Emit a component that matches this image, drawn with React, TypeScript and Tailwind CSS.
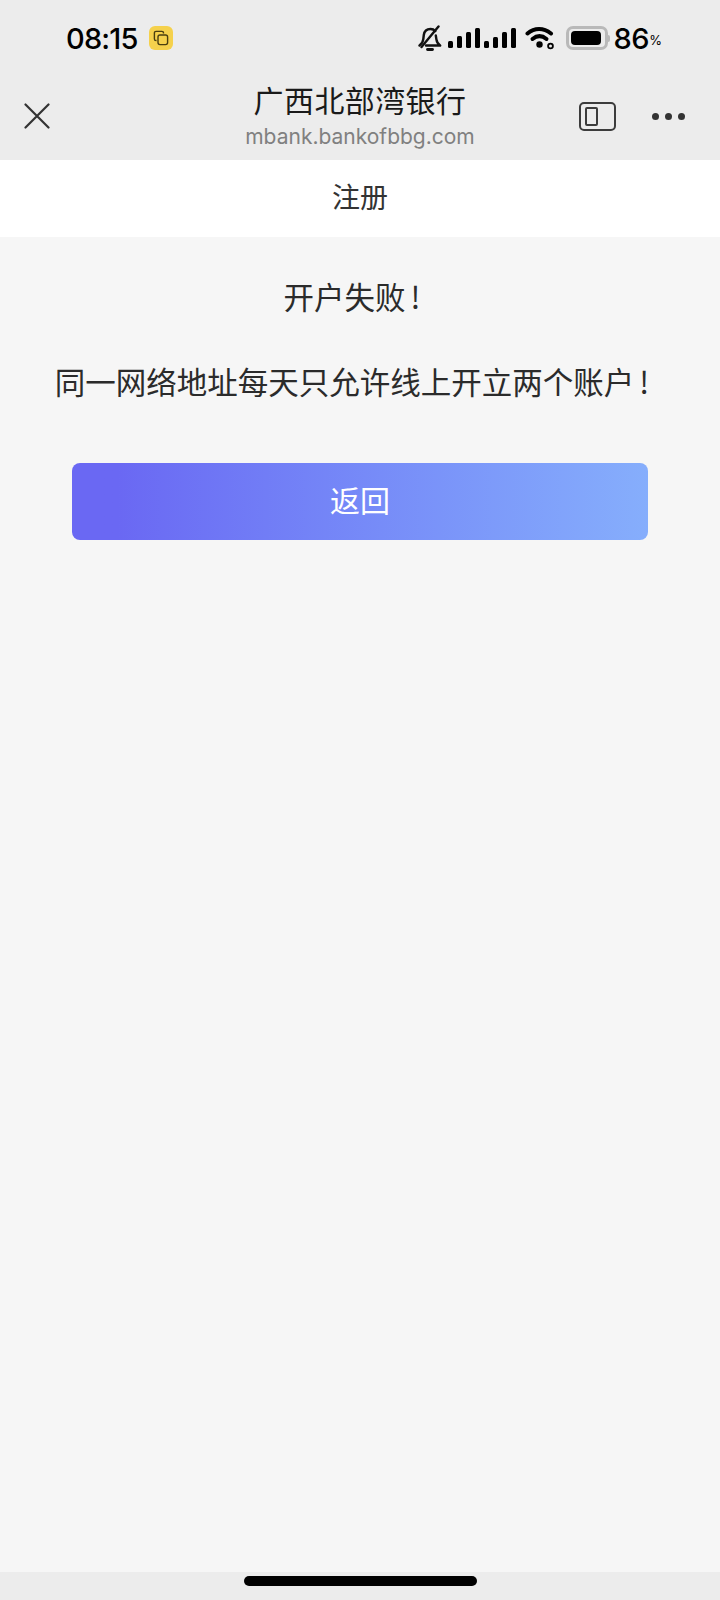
import React from "react";

const cjk = "font-['Noto_Sans_CJK_SC','Noto_Sans',sans-serif]";

function Bars({ heights }: { heights: number[] }) {
  return (
    <div className="flex items-end gap-[4px]">
      {heights.map((h, i) => (
        <div key={i} className="w-[5px] rounded-[1.5px] bg-black" style={{ height: h }} />
      ))}
    </div>
  );
}

function StatusBar() {
  return (
    <div className="flex h-[76px] items-center justify-between pl-[66px] pr-[58px] font-['Inter',sans-serif] text-black">
      <div className="flex items-center gap-[11px]">
        <span className="text-[29px] font-medium leading-none tracking-[-0.8px]">08:15</span>
        <div className="flex h-[24px] w-[24px] items-center justify-center rounded-[6px] bg-[#f5d14c]">
          <svg width="16" height="16" viewBox="0 0 16 16" fill="none" stroke="#4a3f10" strokeWidth="1.4">
            <path d="M10.5 3.5V3a1.6 1.6 0 0 0-1.6-1.6H3A1.6 1.6 0 0 0 1.4 3v5.9A1.6 1.6 0 0 0 3 10.5h.5" />
            <rect x="5" y="5" width="9.6" height="9.6" rx="2" />
          </svg>
        </div>
      </div>
      <div className="flex items-center">
        <svg width="24" height="26" viewBox="0 0 24 26" fill="none" stroke="#111" strokeWidth="2.4" strokeLinecap="round" strokeLinejoin="round">
          <path d="M1.5 20.5c2.5-1.8 3.5-3.5 3.8-6.5l.5-4c.5-3.5 3-6 6.7-6 2 0 3.6.7 4.8 2" />
          <path d="M17.8 10.5l.6 3.9c.4 2.8 1.4 4.6 3.8 6.1H8" />
          <path d="M20.5 1.5 3.5 22" />
          <path d="M9.5 24.5h5" strokeWidth="2.8" />
        </svg>
        <div className="ml-[6px] flex gap-[4px]">
          <Bars heights={[7, 12, 16, 20]} />
          <Bars heights={[7, 11, 16, 20]} />
        </div>
        <svg className="ml-[9px]" width="30" height="24" viewBox="0 0 30 24" fill="none" stroke="#000" strokeLinecap="round">
          <path d="M2.5 7.5C9.5 1.500 18.500 1.500 26 7.500" strokeWidth="4" />
          <path d="M7.500 13c4.500-3.700 9.500-3.700 14 0" strokeWidth="4" />
          <circle cx="14.500" cy="18.500" r="3.200" fill="#000" stroke="none" />
          <circle cx="25.500" cy="20" r="2.400" strokeWidth="1.800" />
        </svg>
        <div className="ml-[11px] flex h-[24px] w-[42px] items-center justify-start rounded-[7px] border-[3px] border-[#b9b9b9] p-[2px]">
          <div className="h-full w-[30px] rounded-[4px] bg-black" />
        </div>
        <div className="h-[7px] w-[2px] rounded-r-[2px] bg-[#b9b9b9]" />
        <span className="ml-[4px] text-[29px] font-medium leading-none tracking-[-0.4px]">86</span>
        <span className="mt-[5px] text-[13px] leading-none">%</span>
      </div>
    </div>
  );
}

function NavBar() {
  return (
    <div className="grid h-[84px] grid-cols-[1fr_auto_1fr] items-start px-[24px] pt-[1px]">
      <svg className="mt-[26px]" width="26" height="26" viewBox="0 0 26 26" fill="none" stroke="#333" strokeWidth="2.2" strokeLinecap="round">
        <path d="M1.5 1.5 24.5 24.5M24.5 1.5 1.5 24.5" />
      </svg>
      <div className="flex flex-col items-center">
        <div className={`${cjk} text-[30px] leading-[45px] tracking-[0.4px] text-[#1a1a1a]`}>广西北部湾银行</div>
        <div className="mt-[1px] font-['Inter',sans-serif] text-[21px] leading-[28px] text-[#808080]">mbank.bankofbbg.com</div>
      </div>
      <div className="mt-[25px] flex items-center justify-end gap-[36px] pr-[11px]">
        <div className="flex h-[29px] w-[37px] items-center rounded-[5px] border-[2px] border-[#3c3c3c] pl-[4px]">
          <div className="h-[19px] w-[13px] rounded-[2px] border-[2px] border-[#3c3c3c]" />
        </div>
        <div className="flex gap-[6px]">
          <div className="h-[7px] w-[7px] rounded-full bg-[#333]" />
          <div className="h-[7px] w-[7px] rounded-full bg-[#333]" />
          <div className="h-[7px] w-[7px] rounded-full bg-[#333]" />
        </div>
      </div>
    </div>
  );
}

export default function App() {
  return (
    <div className={`${cjk} flex h-[1600px] w-[720px] flex-col bg-[#f6f6f6]`}>
      <div className="bg-[#ececec]">
        <StatusBar />
        <NavBar />
      </div>
      <div className="flex h-[77px] items-center justify-center bg-white pb-[6px] text-[28px] text-[#333]">注册</div>
      <div className="flex flex-1 flex-col items-center pt-[37px]">
        <p className="mr-[16px] text-[30.5px] leading-[44px] text-[#2b2b2b]">
          开户失败<span className="ml-[5px]">!</span>
        </p>
        <p className="mr-[16px] mt-[41px] whitespace-nowrap text-[30.5px] leading-[44px] text-[#2b2b2b]">
          同一网络地址每天只允许线上开立两个账户<span className="ml-[5px]">!</span>
        </p>
        <button className="mt-[60px] h-[77px] w-[576px] rounded-[8px] bg-gradient-to-r from-[#6a68f3] from-[8%] to-[#86aefc] pb-[4px] text-[30px] text-white">
          返回
        </button>
      </div>
      <div className="flex h-[28px] justify-center bg-[#ececec] pt-[4px]">
        <div className="h-[10px] w-[233px] rounded-full bg-black" />
      </div>
    </div>
  );
}
